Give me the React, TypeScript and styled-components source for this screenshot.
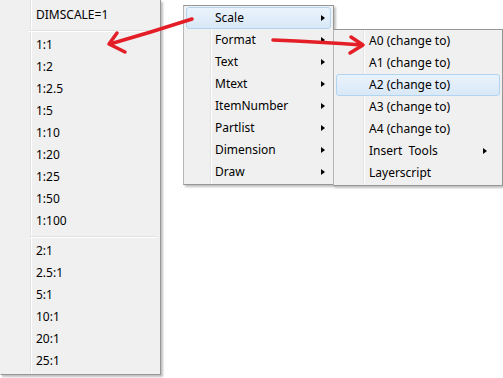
import React from "react";
import styled, { createGlobalStyle } from "styled-components";

const Global = createGlobalStyle`
  html, body { margin: 0; padding: 0; background: #ffffff; }
  body { font-family: "Segoe UI", "Noto Sans", "Open Sans", sans-serif; }
`;

const Stage = styled.div`
  position: relative;
  width: 503px;
  height: 378px;
  overflow: hidden;
  background: #ffffff;
`;

const Menu = styled.div<{ $left: number; $top: number; $width: number; $gutter: number; $noLeft?: boolean; $noTop?: boolean }>`
  position: absolute;
  left: ${(p) => p.$left}px;
  top: ${(p) => p.$top}px;
  width: ${(p) => p.$width}px;
  box-sizing: border-box;
  display: flex;
  flex-direction: column;
  border: 1px solid #979797;
  border-left-color: ${(p) => (p.$noLeft ? "transparent" : "#b5b5b5")};
  border-top-width: ${(p) => (p.$noTop ? 0 : 1)}px;
  background: linear-gradient(
    to right,
    #f0f0f0 ${(p) => p.$gutter}px,
    #e2e3e3 ${(p) => p.$gutter}px,
    #e2e3e3 ${(p) => p.$gutter + 1}px,
    #ffffff ${(p) => p.$gutter + 1}px,
    #ffffff ${(p) => p.$gutter + 2}px,
    #f0f0f0 ${(p) => p.$gutter + 2}px
  );
  box-shadow: 2px 2px 2px rgba(0, 0, 0, 0.25);
  font-size: 12px;
  color: #000000;
`;

const Pad = styled.div<{ $h: number }>`
  height: ${(p) => p.$h}px;
  flex: none;
`;

const Item = styled.div<{ $indent: number; $active?: boolean; $arrowGap: number }>`
  position: relative;
  height: 22px;
  flex: none;
  display: flex;
  align-items: center;
  padding-left: ${(p) => p.$indent}px;
  padding-right: ${(p) => p.$arrowGap}px;
  white-space: pre;
  box-sizing: border-box;
  margin: 0 2px;
  border: 1px solid ${(p) => (p.$active ? "#b1d4f1" : "transparent")};
  border-radius: 3px;
  background: ${(p) =>
    p.$active ? "linear-gradient(to bottom, #eaf3fc, #d9e8f7)" : "transparent"};
`;

const Label = styled.span`
  flex: 1;
  line-height: 20px;
`;

const Arrow = styled.span`
  width: 0;
  height: 0;
  border-top: 3.5px solid transparent;
  border-bottom: 3.5px solid transparent;
  border-left: 4px solid #000000;
  flex: none;
`;

const Separator = styled.div<{ $indent: number }>`
  height: 8px;
  flex: none;
  margin-left: ${(p) => p.$indent}px;
  margin-right: 3px;
  position: relative;
  &::before {
    content: "";
    position: absolute;
    left: 0;
    right: 0;
    top: 4px;
    height: 1px;
    background: #e0e0e0;
    box-shadow: 0 1px 0 #ffffff;
  }
`;

const Annotations = styled.svg`
  position: absolute;
  left: 0;
  top: 0;
  pointer-events: none;
`;

type Entry = { label?: string; sub?: boolean; active?: boolean; sep?: boolean };

const leftEntries: Entry[] = [
  { label: "DIMSCALE=1" },
  { sep: true },
  ...["1:1", "1:2", "1:2.5", "1:5", "1:10", "1:20", "1:25", "1:50", "1:100"].map((l) => ({ label: l })),
  { sep: true },
  ...["2:1", "2.5:1", "5:1", "10:1", "20:1", "25:1"].map((l) => ({ label: l })),
];

const midEntries: Entry[] = [
  { label: "Scale", sub: true, active: true },
  { label: "Format", sub: true },
  { label: "Text", sub: true },
  { label: "Mtext", sub: true },
  { label: "ItemNumber", sub: true },
  { label: "Partlist", sub: true },
  { label: "Dimension", sub: true },
  { label: "Draw", sub: true },
];

const rightEntries: Entry[] = [
  { label: "A0 (change to)" },
  { label: "A1 (change to)" },
  { label: "A2 (change to)", active: true },
  { label: "A3 (change to)" },
  { label: "A4 (change to)" },
  { label: "Insert  Tools", sub: true },
  { label: "Layerscript" },
];

function Entries({ list, indent, sepIndent, arrowGap }: { list: Entry[]; indent: number; sepIndent: number; arrowGap: number }) {
  return (
    <>
      {list.map((e, i) =>
        e.sep ? (
          <Separator key={i} $indent={sepIndent} />
        ) : (
          <Item key={i} $indent={indent} $active={e.active} $arrowGap={arrowGap}>
            <Label>{e.label}</Label>
            {e.sub && <Arrow />}
          </Item>
        )
      )}
    </>
  );
}

export default function App() {
  return (
    <Stage>
      <Global />
      <Menu $left={0} $top={0} $width={161} $gutter={29} $noLeft $noTop>
        <Pad $h={4} />
        <Entries list={leftEntries} indent={32} sepIndent={28} arrowGap={8} />
        <Pad $h={2} />
      </Menu>
      <Menu $left={183} $top={5} $width={151} $gutter={26}>
        <Pad $h={1} />
        <Entries list={midEntries} indent={28} sepIndent={26} arrowGap={5} />
        <Pad $h={1} />
      </Menu>
      <Menu $left={333} $top={29} $width={170} $gutter={29}>
        <Entries list={rightEntries} indent={32} sepIndent={29} arrowGap={12} />
        <Pad $h={1} />
      </Menu>
      <Annotations width={503} height={378} viewBox="0 0 503 378">
        <g fill="none" stroke="#e41e26" strokeWidth={3.5} strokeLinecap="round" strokeLinejoin="round">
          <path d="M192 19 Q152 32 110 44" />
          <path d="M117 33 L109 44 L125 52" />
          <path d="M273 40 Q320 42 362 45" />
          <path d="M351 37 L363 45 L350 53" />
        </g>
      </Annotations>
    </Stage>
  );
}
